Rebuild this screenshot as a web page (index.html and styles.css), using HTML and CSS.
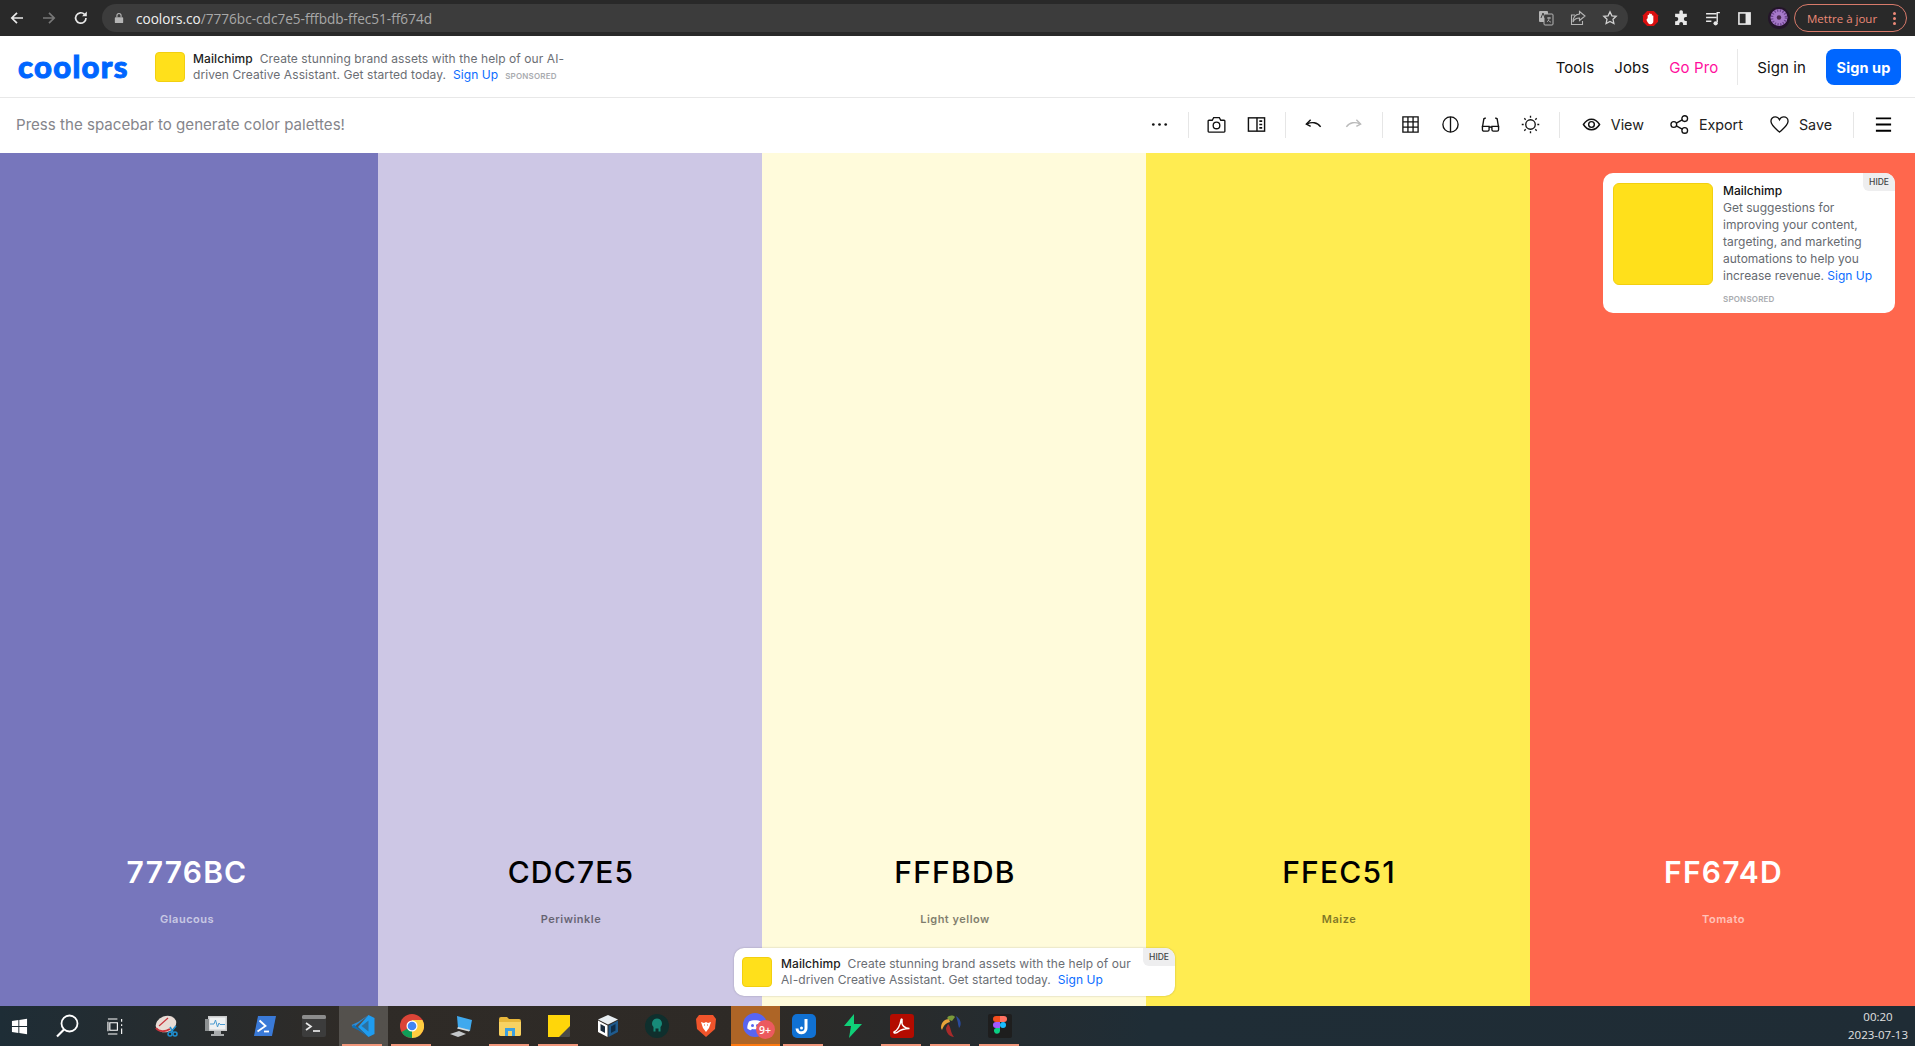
FILE: index.html
```html
<!DOCTYPE html>
<html lang="en">
<head>
    <meta charset="UTF-8">
    <meta name="viewport" content="width=device-width, initial-scale=1.0">
    <title>Coolors</title>
    <link rel="stylesheet" href="styles.css">
</head>
<body>
    <!-- Browser chrome -->
    <div class="browser-bar">
        <svg class="chrome-btn" viewBox="0 0 16 16"><path d="M14 8H3M8 2.800 2.800 8 8 13.200" fill="none" stroke="#e8e8e8" stroke-width="1.700"/></svg>
        <svg class="chrome-btn" viewBox="0 0 16 16"><path d="M2 8h11M8 2.800 13.200 8 8 13.200" fill="none" stroke="#777" stroke-width="1.700"/></svg>
        <svg class="chrome-btn" viewBox="0 0 16 16"><path d="M13 8a5.200 5.200 0 1 1-1.500-3.700" fill="none" stroke="#e8e8e8" stroke-width="1.700"/><path d="M13.800 1.500v4.700H9.100z" fill="#e8e8e8"/></svg>
        <div class="omnibox">
            <svg class="lock" viewBox="0 0 12 14"><path d="M2 6h8a1 1 0 0 1 1 1v5a1 1 0 0 1-1 1H2a1 1 0 0 1-1-1V7a1 1 0 0 1 1-1z" fill="#b5b5b5"/><path d="M3.500 6V4a2.500 2.500 0 0 1 5 0v2" fill="none" stroke="#b5b5b5" stroke-width="1.300"/></svg>
            <span class="url"><span class="url-host">coolors.co</span>/7776bc-cdc7e5-fffbdb-ffec51-ff674d</span>
            <span class="omni-icons">
                <svg viewBox="0 0 16 16"><rect x="1" y="1" width="9" height="11" rx="1" fill="#b5b5b5"/><rect x="6" y="4" width="9" height="11" rx="1" fill="#3c3c3c" stroke="#b5b5b5"/><path d="M3 8l2-5 2 5" fill="none" stroke="#3c3c3c" stroke-width="1"/><path d="M9 8h4M11 7v1c0 2-1 3-2 4M10 10c1 1 2 2 3 2" fill="none" stroke="#b5b5b5" stroke-width=".9"/></svg>
                <svg viewBox="0 0 16 16"><path d="M9.500 1.500 15 6l-5.500 4.500V8C6 8 4 9.500 3 12c0-4.500 2.500-7.500 6.500-8z" fill="none" stroke="#b5b5b5" stroke-width="1.100"/><path d="M12.500 11v3.500H1.500V5H5" fill="none" stroke="#b5b5b5" stroke-width="1.100"/></svg>
                <svg viewBox="0 0 16 16"><path d="M8 1.800l1.900 4 4.300.5-3.200 3 .9 4.300L8 11.400l-3.900 2.200.9-4.300-3.200-3 4.300-.5z" fill="none" stroke="#d0d0d0" stroke-width="1.300"/></svg>
            </span>
        </div>
        <div class="ext-icons">
            <svg viewBox="0 0 18 18"><path d="M5.500 1h7L17 5.500v7L12.500 17h-7L1 12.500v-7z" fill="#d90f0f"/><path d="M6 9V5.500a.8.8 0 0 1 1.500 0V4a.8.8 0 0 1 1.500 0v.500a.8.8 0 0 1 1.500 0V6a.8.8 0 0 1 1.500 0v6a3 3 0 0 1-3 3H8.500C7 15 6 13 5 11 4.500 9.500 5.500 9 6 9z" fill="#fff"/></svg>
            <svg viewBox="0 0 16 16"><path d="M6 1.500a1.700 1.700 0 0 1 3.300 0V3.500H13v3.200h-1a1.800 1.800 0 0 0 0 3.600h1V14H9.500v-1a1.800 1.800 0 0 0-3.600 0v1H2v-3.500h1a2 2 0 0 0 0-4H2V3.500h4z" fill="#e8e8e8"/></svg>
            <svg viewBox="0 0 16 16"><path d="M1 3.500h10M1 7h10M1 10.500h5" stroke="#e8e8e8" stroke-width="1.400" fill="none"/><path d="M14 2.500h-2.500v9" stroke="#e8e8e8" stroke-width="1.300" fill="none"/><circle cx="10" cy="12.500" r="2" fill="#e8e8e8"/></svg>
            <svg viewBox="0 0 16 16"><path d="M2 2h12v12H2z" fill="#e8e8e8"/><path d="M3.500 3.500h5.500v9H3.500z" fill="#292929"/></svg>
            <svg class="avatar" viewBox="0 0 22 22"><circle cx="11" cy="11" r="11" fill="#24152a"/><circle cx="11" cy="10.500" r="8.500" fill="#a679c9"/><circle cx="11" cy="10.500" r="7" fill="none" stroke="#6f4590" stroke-width="2.500" stroke-dasharray="1.300 1.500"/><circle cx="11" cy="10.500" r="2.200" fill="#4b2a4f"/></svg>
        </div>
        <div class="update-pill">
            <span>Mettre à jour</span>
            <span class="pill-dots"><i></i><i></i><i></i></span>
        </div>
    </div>

    <!-- Main navigation -->
    <header class="site-nav">
        <a class="logo">coolors</a>
        <div class="top-ad">
            <div class="ad-square small"></div>
            <p class="top-ad-text"><b>Mailchimp</b>&nbsp; Create stunning brand assets with the help of our AI-<br>driven Creative Assistant. Get started today. &nbsp;<a class="ad-link">Sign Up</a> &nbsp;<span class="sponsored">SPONSORED</span></p>
        </div>
        <nav class="nav-links">
            <a>Tools</a>
            <a>Jobs</a>
            <a class="go-pro">Go Pro</a>
            <span class="nav-divider"></span>
            <a>Sign in</a>
            <a class="signup-btn">Sign up</a>
        </nav>
    </header>

    <!-- Palette toolbar -->
    <div class="toolbar">
        <span class="hint">Press the spacebar to generate color palettes!</span>
        <div class="tools">
            <button class="tool"><svg viewBox="0 0 20 20"><circle cx="3.500" cy="10" r="1.400" fill="#111"/><circle cx="10" cy="10" r="1.400" fill="#111"/><circle cx="16.500" cy="10" r="1.400" fill="#111"/></svg></button>
            <span class="tool-sep"></span>
            <button class="tool"><svg viewBox="0 0 20 20"><path d="M2 5.500h3.500L7 2.800h6l1.500 2.700H18a.8.8 0 0 1 .8.800v10.900a.8.8 0 0 1-.8.800H2a.8.800 0 0 1-.8-.8V6.300a.8.800 0 0 1 .8-.8z" fill="none" stroke="#111" stroke-width="1.400"/><circle cx="10" cy="11" r="3.500" fill="none" stroke="#111" stroke-width="1.400"/></svg></button>
            <button class="tool"><svg viewBox="0 0 20 20"><rect x="1.500" y="3" width="17" height="14" fill="none" stroke="#111" stroke-width="1.500"/><path d="M10.500 3v14" stroke="#111" stroke-width="1.500"/><path d="M13 6.500h3M13 10h3M13 13.500h3" stroke="#111" stroke-width="1.800"/></svg></button>
            <span class="tool-sep"></span>
            <button class="tool"><svg viewBox="0 0 20 20"><path d="M7 5 2.500 9.500 7 12" fill="none" stroke="#111" stroke-width="1.500"/><path d="M3 9.500c5-2.500 11-2 14.500 3" fill="none" stroke="#111" stroke-width="1.500"/></svg></button>
            <button class="tool"><svg viewBox="0 0 20 20"><path d="M13 5l4.500 4.500L13 12" fill="none" stroke="#bbb" stroke-width="1.500"/><path d="M17 9.500c-5-2.500-11-2-14.500 3" fill="none" stroke="#bbb" stroke-width="1.500"/></svg></button>
            <span class="tool-sep"></span>
            <button class="tool"><svg viewBox="0 0 20 20"><path d="M2 2h16v16H2zM7.300 2v16M12.700 2v16M2 7.300h16M2 12.700h16" fill="none" stroke="#111" stroke-width="1.400"/></svg></button>
            <button class="tool"><svg viewBox="0 0 20 20"><circle cx="10" cy="10" r="8" fill="none" stroke="#111" stroke-width="1.400"/><path d="M10 2v16" stroke="#111" stroke-width="1.400"/></svg></button>
            <button class="tool"><svg viewBox="0 0 20 20"><path d="M5 3 3 4 1.500 13M15 3l2 1 1.500 9" fill="none" stroke="#111" stroke-width="1.400"/><path d="M1.500 12h7v3.500a1.500 1.500 0 0 1-1.500 1.500H3a1.500 1.500 0 0 1-1.500-1.500zM11.500 12h7v3.500a1.500 1.500 0 0 1-1.500 1.500h-4a1.500 1.500 0 0 1-1.500-1.500zM8.500 13c1-.5 2-.5 3 0" fill="none" stroke="#111" stroke-width="1.400"/></svg></button>
            <button class="tool"><svg viewBox="0 0 20 20"><circle cx="10" cy="10" r="5" fill="none" stroke="#111" stroke-width="1.400"/><path d="M10 .8v2M10 17.200v2M.8 10h2M17.200 10h2M3.500 3.500l1.400 1.400M15.100 15.100l1.400 1.400M3.500 16.500l1.400-1.400M15.100 4.900l1.400-1.400" stroke="#111" stroke-width="1.400"/></svg></button>
            <span class="tool-sep"></span>
            <button class="tool-text tool-view"><svg viewBox="0 0 20 20"><path d="M1.500 10C4 6 7 4.500 10 4.500S16 6 18.500 10C16 14 13 15.500 10 15.500S4 14 1.500 10z" fill="none" stroke="#111" stroke-width="1.500"/><circle cx="10" cy="10" r="3" fill="none" stroke="#111" stroke-width="1.500"/></svg>View</button>
            <button class="tool-text tool-export"><svg viewBox="0 0 20 20"><circle cx="4" cy="10" r="3" fill="none" stroke="#111" stroke-width="1.400"/><circle cx="15.500" cy="3.800" r="3" fill="none" stroke="#111" stroke-width="1.400"/><circle cx="15.500" cy="16.200" r="3" fill="none" stroke="#111" stroke-width="1.400"/><path d="M6.700 8.600l6.100-3.400M6.700 11.400l6.100 3.400" stroke="#111" stroke-width="1.400"/></svg>Export</button>
            <button class="tool-text tool-save"><svg viewBox="0 0 20 20"><path d="M10 18C5 13.500 1 10.500 1 6.500 1 3.700 3.200 2 5.500 2 7.500 2 9 3 10 5c1-2 2.500-3 4.500-3C16.800 2 19 3.700 19 6.500c0 4-4 7-9 11.500z" fill="none" stroke="#111" stroke-width="1.400"/></svg>Save</button>
            <span class="tool-sep last"></span>
            <button class="tool"><svg viewBox="0 0 20 20"><path d="M2 3.500h16M2 10h16M2 16.500h16" stroke="#000" stroke-width="2"/></svg></button>
        </div>
    </div>

    <!-- Colour columns -->
    <main class="palette">
        <section class="swatch swatch-first light-text" style="background-color:#7776bc">
            <h2>7776BC</h2><span class="swatch-name">Glaucous</span>
        </section>
        <section class="swatch" style="background-color:#cdc7e5">
            <h2>CDC7E5</h2><span class="swatch-name">Periwinkle</span>
        </section>
        <section class="swatch" style="background-color:#fffbdb">
            <h2>FFFBDB</h2><span class="swatch-name">Light yellow</span>
        </section>
        <section class="swatch" style="background-color:#ffec51">
            <h2>FFEC51</h2><span class="swatch-name">Maize</span>
        </section>
        <section class="swatch light-text" style="background-color:#ff674d">
            <h2>FF674D</h2><span class="swatch-name">Tomato</span>
        </section>

        <aside class="side-ad">
            <span class="hide-tab">HIDE</span>
            <div class="ad-square big"></div>
            <div class="side-ad-body">
                <strong>Mailchimp</strong>
                <p>Get suggestions for improving your content, targeting, and marketing automations to help you increase revenue. <a class="ad-link">Sign Up</a></p>
                <span class="sponsored">SPONSORED</span>
            </div>
        </aside>

        <aside class="bottom-ad">
            <span class="hide-tab">HIDE</span>
            <div class="ad-square small"></div>
            <p><b>Mailchimp</b>&nbsp; Create stunning brand assets with the help of our<br>AI-driven Creative Assistant. Get started today. &nbsp;<a class="ad-link">Sign Up</a></p>
        </aside>
    </main>

    <!-- Windows taskbar -->
    <footer class="taskbar">
        <div class="task sys sys-start"><svg viewBox="0 0 18 18"><path d="M1 3.200 7.800 2.200V8.500H1zM8.800 2l8.200-1.200V8.500H8.800zM1 9.500h6.800v6.300L1 14.800zM8.800 9.500H17v7.700L8.800 16z" fill="#fff"/></svg></div>
        <div class="task sys sys-search"><svg viewBox="0 0 24 24"><circle cx="14.500" cy="9.500" r="8" fill="none" stroke="#fff" stroke-width="1.800"/><path d="M9 15.500 2 22.500" stroke="#fff" stroke-width="2.200"/></svg></div>
        <div class="task sys sys-view"><svg viewBox="0 0 18 18"><path d="M1 1h10M1 17h10M3 5h8v8H3zM1 4v10M15.500 1v3M15.500 6.500v2M15.500 11v6" fill="none" stroke="#fff" stroke-width="1.200"/></svg></div>

        <div class="task"><svg viewBox="0 0 24 24"><ellipse cx="11" cy="10" rx="10.500" ry="8" fill="#e8dcd5" transform="rotate(-20 11 10)"/><path d="M1 14c3 4 9 4 14 1" fill="none" stroke="#c8323a" stroke-width="2"/><path d="M13 4 4 12" stroke="#c8323a" stroke-width="1.200"/><path d="M15 13l3 5M21 12l-5 6" stroke="#1f8fd0" stroke-width="1.500"/><circle cx="15" cy="20" r="2" fill="none" stroke="#1f8fd0" stroke-width="1.500"/><circle cx="20" cy="20" r="2" fill="none" stroke="#1f8fd0" stroke-width="1.500"/></svg></div>
        <div class="task"><svg viewBox="0 0 24 24"><path d="M4 2h19v15H4z" fill="#c9cbcc"/><path d="M5.500 3.500h16v12h-16z" fill="#eef1f2"/><path d="M6 10h4l1.500-4 2 7 1.500-4 1 1.500h5" fill="none" stroke="#4a9bd0" stroke-width="1"/><path d="M1 5h4v12H1z" fill="#8d9192"/><path d="M10 17h7v3h3v2H7v-2h3z" fill="#a8abac"/></svg></div>
        <div class="task"><svg viewBox="0 0 24 24"><path d="M5 2h18l-4 20H1z" fill="#3a7ad8"/><path d="M6.500 6.500l6 5.500-8 5.500" fill="none" stroke="#fff" stroke-width="1.800"/><path d="M11 17.500h5" stroke="#fff" stroke-width="1.800"/></svg></div>
        <div class="task"><svg viewBox="0 0 24 24"><rect y="1" width="24" height="22" rx="2" fill="#3c3c3c"/><rect y="1" width="24" height="4" rx="1.500" fill="#8c8c8c"/><path d="M4 9l5 3.500-5 3.500" fill="none" stroke="#e8e8e8" stroke-width="1.700"/><path d="M11 17h7" stroke="#e8e8e8" stroke-width="1.700"/></svg></div>
        <div class="task task-active task-line"><svg viewBox="0 0 24 24"><path d="M17.500 1 23.500 4v16L17.500 23 7 13z" fill="#1f9cf0"/><path d="M17.500 1 3 13.200 .5 11 7 8z" fill="#2b8cd8"/><path d="M17.500 23 3 10.800 .5 13 7 16z" fill="#0f70b8"/><path d="M17.500 6.500v11L10.500 12z" fill="#3c3c3c" fill-opacity=".45"/></svg></div>
        <div class="task task-line"><svg viewBox="0 0 24 24"><circle cx="12" cy="12" r="12" fill="#db4437"/><path d="M12 12 1.600 18A12 12 0 0 0 12 24c3 0 6-1 8-3z" fill="#0f9d58"/><path d="M12 6h10.400A12 12 0 0 1 12 24z" fill="#ffcd40"/><circle cx="12" cy="12" r="5.500" fill="#fff"/><circle cx="12" cy="12" r="4.300" fill="#4285f4"/></svg></div>
        <div class="task"><svg viewBox="0 0 24 24"><path d="M8 2l15 4-2 11-12-3z" fill="#3fa9ee"/><path d="M9 13l12 3-1 1.500-12-3z" fill="#d7dadc"/><path d="M1 20l9-3 7 3-8 3z" fill="#c4c7c9"/></svg></div>
        <div class="task task-line"><svg viewBox="0 0 24 24"><path d="M1 5a2 2 0 0 1 2-2h6l2 2h10a2 2 0 0 1 2 2v13a2 2 0 0 1-2 2H3a2 2 0 0 1-2-2z" fill="#e8b73a"/><path d="M1 8h22v12a2 2 0 0 1-2 2H3a2 2 0 0 1-2-2z" fill="#f8d262"/><path d="M7 14h10v8H7z" fill="#3c9fe0"/><path d="M10 17h4v5h-4z" fill="#f8d262"/></svg></div>
        <div class="task task-line"><svg viewBox="0 0 24 24"><path d="M1 1h22v14l-8 8H1z" fill="#ffd60a"/><path d="M23 12v10a1 1 0 0 1-1 1H12z" fill="#4a4a48"/></svg></div>
        <div class="task"><svg viewBox="0 0 24 24"><path d="M12 1l10 4.500-10 5-10-5z" fill="#e8eef2"/><path d="M2 6.500l9.500 5V23L2 18z" fill="#fff"/><path d="M22 6.500l-9.500 5V23l9.500-5z" fill="#1f5a8c"/><path d="M4.500 10l4.500 2.400v6.500l-4.500-2.400z" fill="#1a2c3d"/><path d="M19.500 10 15 12.400v6.500l4.500-2.400z" fill="#0f2c46"/></svg></div>
        <div class="task"><svg viewBox="0 0 24 24"><circle cx="12" cy="12" r="12" fill="#0f2f2d"/><path d="M12 4.500a5 5 0 0 1 3.500 8.500v4.500h-2v-3h-3v3h-2V13A5 5 0 0 1 12 4.500z" fill="#178a79"/></svg></div>
        <div class="task"><svg viewBox="0 0 24 24"><path d="M5 1h14l3 4-1 10-9 8-9-8-1-10z" fill="#f0542b"/><path d="M7 8l3 1 2-1 2 1 3-1-2 6-3 4-3-4z" fill="#fff"/><path d="M10 11h1M13 11h1" stroke="#f0542b" stroke-width="1.200"/></svg></div>
        <div class="task task-orange">
            <svg viewBox="0 0 24 24"><circle cx="12" cy="12" r="12" fill="#5865f2"/><path d="M6 8.500c3.500-1.700 8.500-1.700 12 0 1.200 2.300 1.800 4.500 1.700 7-1.300 1-2.500 1.500-3.700 1.800l-.9-1.400c-2 .6-4.200.6-6.200 0l-.9 1.400c-1.200-.3-2.400-.8-3.700-1.800-.1-2.500.5-4.700 1.700-7z" fill="#fff"/><circle cx="9.500" cy="12.500" r="1.500" fill="#5865f2"/><circle cx="14.500" cy="12.500" r="1.500" fill="#5865f2"/></svg>
            <span class="badge">9+</span>
        </div>
        <div class="task task-line"><svg viewBox="0 0 24 24"><rect width="24" height="24" rx="5" fill="#1071d3"/><path d="M14 5v9a4.500 4.500 0 0 1-9 .5" fill="none" stroke="#fff" stroke-width="3"/><circle cx="9.500" cy="14" r="1.500" fill="#fff"/></svg></div>
        <div class="task"><svg viewBox="0 0 24 24"><path d="M13 0 3 12h7l-2 12L21 10h-8z" fill="#10d078"/></svg></div>
        <div class="task task-line"><svg viewBox="0 0 24 24"><rect width="24" height="24" rx="3" fill="#b30b00"/><path d="M4 18c3-1.500 6-6 7-12 .2-1.500 1.500-1 1 .5-1 5 3 8 7.500 8-3 .2-8 .5-11 3-2 2-5 2-4.500.5z" fill="none" stroke="#fff" stroke-width="1.500"/></svg></div>
        <div class="task task-line"><svg viewBox="0 0 24 24"><path d="M2 14C2 8 6 5 10 5l1 3c-4 1-6 3-8 8z" fill="#e8a33a"/><path d="M8 4c2-3 6-3 8-1l-3 4c-2-1-3-1-5-3z" fill="#7a9a3a"/><path d="M17 2c5 3 6 9 3 12l-1-4c0-2-1-4-2-8z" fill="#2a4a9a"/><path d="M9 10c3 2 2 8 6 13-4 0-8-4-8-9z" fill="#a82a2a"/></svg></div>
        <div class="task task-line"><svg viewBox="0 0 24 24"><rect width="24" height="24" rx="2" fill="#1e1e1e"/><path d="M8 2h4v6H8a3 3 0 0 1 0-6z" fill="#f24e1e"/><path d="M12 2h4a3 3 0 0 1 0 6h-4z" fill="#ff7262"/><path d="M8 8h4v6H8a3 3 0 0 1 0-6z" fill="#a259ff"/><circle cx="15" cy="11" r="3" fill="#1abcfe"/><path d="M8 14h4v3a3 3 0 1 1-4-3z" fill="#0acf83"/></svg></div>
        <div class="clock"><span>00:20</span><span>2023-07-13</span></div>
    </footer>
</body>
</html>
```
FILE: styles.css
```css
/* Page frame */
* {
    box-sizing: border-box;
}

html, body {
    height: 100%;
}

body {
    margin: 0;
    display: flex;
    flex-direction: column;
    overflow: hidden;
    font-family: Inter, Arial, sans-serif;
    color: #111;
    background-color: #fff;
}

/* Browser chrome */
.browser-bar {
    height: 36px;
    flex: none;
    display: flex;
    align-items: center;
    padding: 0 8px 0 9px;
    background-color: #292929;
}

.chrome-btn {
    width: 16px;
    height: 16px;
    margin-right: 16px;
}

.omnibox {
    width: 1526px;
    height: 28px;
    margin-left: -3px;
    display: flex;
    align-items: center;
    padding: 0 10px 0 12px;
    border-radius: 14px;
    background-color: #3c3c3c;
}

.lock {
    width: 10px;
    height: 12px;
    margin-right: 12px;
}

.url {
    flex: 1;
    font-family: "Open Sans", sans-serif;
    font-size: 13.600px;
    color: #a8a8a8;
}

.url-host {
    color: #f0f0f0;
}

.omni-icons {
    display: flex;
    gap: 16px;
}

.omni-icons svg {
    width: 16px;
    height: 16px;
}

.ext-icons {
    display: flex;
    align-items: center;
    gap: 14.500px;
    margin-left: 13.500px;
}

.ext-icons svg {
    width: 17px;
    height: 17px;
}

.ext-icons .avatar {
    width: 22px;
    height: 22px;
}

.update-pill {
    width: 113px;
    height: 28px;
    margin-left: auto;
    display: flex;
    align-items: center;
    justify-content: space-between;
    padding: 0 10px 0 12px;
    border: 1px solid #d87a6a;
    border-radius: 14px;
    font-family: "Open Sans", sans-serif;
    font-size: 11.500px;
    color: #ee8a78;
}

.pill-dots {
    display: flex;
    flex-direction: column;
    gap: 2px;
}

.pill-dots i {
    width: 3px;
    height: 3px;
    border-radius: 50%;
    background-color: #ee8a78;
}

/* Site navigation */
.site-nav {
    height: 62px;
    flex: none;
    display: flex;
    align-items: center;
    padding: 0 14px 0 18px;
    border-bottom: 1px solid #e8e8e8;
}

.logo {
    width: 137px;
    font-family: Lato, Inter, sans-serif;
    font-size: 31px;
    font-weight: 900;
    letter-spacing: 1.300px;
    line-height: 1;
    color: #0066ff;
    -webkit-text-stroke: 1px #0066ff;
}

.top-ad {
    display: flex;
    align-items: center;
    gap: 8px;
}

.ad-square {
    flex: none;
    border: 1px solid #f2cf10;
    background-color: #ffe01b;
}

.ad-square.small {
    width: 30px;
    height: 30px;
    border-radius: 4px;
}

.ad-square.big {
    width: 100px;
    height: 102px;
    border-radius: 6px;
}

.top-ad-text {
    margin: 2px 0 0;
    font-size: 12px;
    line-height: 16px;
    letter-spacing: 0.08px;
    color: #6b6e74;
}

.top-ad-text b, .bottom-ad b {
    font-weight: 500;
    color: #222;
}

.ad-link {
    color: #0a6cff;
}

.sponsored {
    font-size: 8px;
    font-weight: 600;
    letter-spacing: 0.2px;
    color: #a9abaf;
}

.nav-links {
    display: flex;
    align-items: center;
    margin-left: auto;
    padding-top: 1px;
    font-size: 15px;
    letter-spacing: 0.1px;
}

.nav-links a {
    margin-right: 20px;
}

.nav-links .go-pro {
    margin-right: 19px;
    color: #ff0f9d;
}

.nav-divider {
    width: 1px;
    height: 36px;
    margin-right: 19px;
    background-color: #e8e8e8;
}

.nav-links .signup-btn {
    margin-right: 0;
    width: 75px;
    height: 36px;
    display: flex;
    align-items: center;
    justify-content: center;
    border-radius: 8px;
    font-weight: 700;
    font-size: 14.500px;
    color: #fff;
    background-color: #0066ff;
}

/* Toolbar */
.toolbar {
    height: 55px;
    flex: none;
    display: flex;
    align-items: center;
    justify-content: space-between;
    padding: 0 12px 2px 16px;
}

.hint {
    font-size: 15.100px;
    color: #85858b;
}

.tools {
    display: flex;
    align-items: center;
}

.tool, .tool-text {
    display: flex;
    align-items: center;
    justify-content: center;
    padding: 0;
    border: none;
    background: none;
    font-family: inherit;
    font-size: 14.300px;
    color: #222;
}

.tool {
    width: 40px;
    height: 40px;
}

.tool svg {
    width: 19px;
    height: 19px;
}

.tool-text {
    gap: 10px;
}

.tool-text svg {
    width: 19px;
    height: 19px;
}

.tool-view {
    margin-right: 26px;
}

.tool-export {
    margin-right: 27px;
}

.tool-save {
    margin-right: 21px;
}

.tool-sep {
    width: 1px;
    height: 26px;
    margin: 0 8px;
    background-color: #e6e6e6;
}

.tool-sep + .tool-text {
    margin-left: 14px;
}

.tool-sep.last {
    margin: 0 9px 0 0;
}

/* Palette */
.palette {
    flex: 1;
    min-height: 0;
    position: relative;
    display: grid;
    grid-template-columns: 378px 384px 384px 384px 1fr;
}

.swatch {
    display: flex;
    flex-direction: column;
    align-items: center;
    justify-content: flex-end;
    padding: 0 0 80px 2px;
    color: #000;
}

.swatch-first {
    padding-right: 6px;
}

.swatch h2 {
    margin: 0 0 22px;
    font-size: 30px;
    font-weight: 500;
    letter-spacing: 1.2px;
    line-height: 36px;
}

.light-text h2 {
    font-weight: 600;
}

.swatch-name {
    font-size: 11px;
    font-weight: 600;
    letter-spacing: 0.5px;
    line-height: 14px;
    opacity: 0.5;
}

.light-text .swatch-name {
    opacity: 0.6;
}

.light-text {
    color: #fff;
}

/* Floating ads */
.side-ad, .bottom-ad {
    position: absolute;
    display: flex;
    border-radius: 10px;
    background-color: #fff;
}

.side-ad {
    top: 20px;
    right: 20px;
    width: 292px;
    height: 140px;
    gap: 10px;
    padding: 10px;
}

.side-ad-body {
    display: flex;
    flex-direction: column;
    margin-top: -1px;
    font-size: 12px;
    line-height: 17px;
}

.side-ad-body strong {
    font-weight: 500;
    color: #111;
}

.side-ad-body p {
    margin: 0 0 7px;
    color: #666a70;
}

.bottom-ad {
    left: 734px;
    bottom: 10px;
    width: 441px;
    height: 48px;
    align-items: center;
    gap: 9px;
    padding: 0 8px;
    box-shadow: 0 0 2px rgba(0, 0, 0, 0.25);
}

.bottom-ad p {
    margin: 0;
    font-size: 12px;
    line-height: 16px;
    letter-spacing: 0.07px;
    color: #6b6e74;
}

.hide-tab {
    position: absolute;
    top: 0;
    right: 0;
    width: 32px;
    height: 18px;
    display: flex;
    align-items: center;
    justify-content: center;
    border-radius: 0 10px 0 6px;
    font-size: 8.500px;
    font-weight: 500;
    color: #444;
    background-color: #eeeeef;
}

/* Windows taskbar */
.taskbar {
    height: 40px;
    flex: none;
    display: flex;
    align-items: center;
    background: linear-gradient(90deg, #1e2d36 0%, #2f2b27 18%, #2e2a26 40%, #1f2d36 60%, #1f2c35 100%);
    color: #e2e2e2;
}

.task {
    position: relative;
    width: 49px;
    height: 40px;
    flex: none;
    display: flex;
    align-items: center;
    justify-content: center;
}

.task svg {
    width: 24px;
    height: 24px;
}

.sys-start {
    width: 38px;
}

.sys-start svg {
    width: 17px;
    height: 17px;
}

.sys-search {
    width: 58px;
}

.sys-view {
    width: 38px;
    margin-right: 8.500px;
}

.sys-view svg {
    width: 17px;
    height: 17px;
}

.task-line::after {
    content: "";
    position: absolute;
    left: 3px;
    right: 6px;
    bottom: 0;
    height: 2px;
    background-color: #f0967a;
}

.task-active {
    background-color: rgba(255, 255, 255, 0.18);
}

.task-orange {
    background-color: #ae6526;
    border-bottom: 2px solid #ff7a10;
}

.badge {
    position: absolute;
    right: 5px;
    bottom: 5px;
    width: 19px;
    height: 19px;
    display: flex;
    align-items: center;
    justify-content: center;
    border-radius: 50%;
    font-family: "Open Sans", sans-serif;
    font-size: 10.500px;
    font-weight: 600;
    color: #fff;
    background-color: #ec5a5f;
}

.clock {
    margin-left: auto;
    width: 70px;
    display: flex;
    flex-direction: column;
    align-items: center;
    gap: 2px;
    padding-right: 4px;
    font-family: "Open Sans", sans-serif;
    font-size: 11.500px;
    line-height: 16px;
}
```
